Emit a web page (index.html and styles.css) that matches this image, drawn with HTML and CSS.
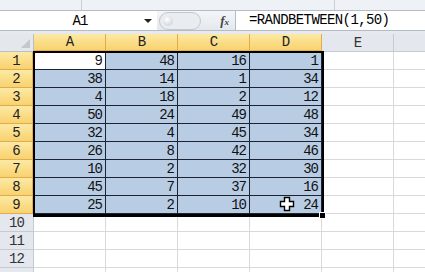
FILE: index.html
```html
<!DOCTYPE html>
<html lang="zh-CN">
<head>
    <meta charset="UTF-8">
    <title>RANDBETWEEN</title>
    <link rel="stylesheet" href="styles.css">
</head>
<body>
    <div class="ribbon">
        <span class="sep sep-1"></span>
        <span class="sep sep-2"></span>
    </div>

    <div class="formula-bar">
        <div class="name-box">
            <span class="cell-ref">A1</span>
            <span class="drop"></span>
        </div>
        <div class="fx-panel">
            <span class="pill"><span class="knob"></span></span>
            <span class="fx">f<sub>x</sub></span>
        </div>
        <div class="formula">=RANDBETWEEN(1,50)</div>
    </div>
    <div class="bar-gap"></div>

    <div class="sheet-wrap">
        <div class="sheet" id="sheet"></div>
        <div class="selection"><span class="handle"></span></div>
        <svg class="cursor" width="16" height="16" viewBox="0 0 16 16">
            <path d="M5.5 1.5h5v4h4v5h-4v4h-5v-4h-4v-5h4z" fill="#fff" stroke="#000" stroke-width="1.4"/>
        </svg>
    </div>

    <script>
        const cols = ["A", "B", "C", "D", "E"];
        const data = [
            [9, 48, 16, 1],
            [38, 14, 1, 34],
            [4, 18, 2, 12],
            [50, 24, 49, 48],
            [32, 4, 45, 34],
            [26, 8, 42, 46],
            [10, 2, 32, 30],
            [45, 7, 37, 16],
            [25, 2, 10, 24]
        ];
        const sheet = document.getElementById("sheet");
        let html = '<div class="corner"><span class="tri"></span></div>';

        cols.forEach((c, i) => {
            html += `<div class="col-head${i < 4 ? " on" : ""}">${c}</div>`;
        });
        html += '<div class="col-head rest"></div>';

        // row 13 only peeks in at the bottom edge, so no label
        for (let r = 1; r <= 13; r++) {
            const row = data[r - 1];
            html += `<div class="row-head${row ? " on" : ""}">${r < 13 ? r : ""}</div>`;
            for (let c = 0; c < 5; c++) {
                if (row && c < 4) {
                    const cls = r === 1 && c === 0 ? "cell in active" : "cell in";
                    html += `<div class="${cls}">${row[c]}</div>`;
                } else {
                    html += '<div class="cell"></div>';
                }
            }
            html += '<div class="cell rest"></div>';
        }
        sheet.innerHTML = html;
    </script>
</body>
</html>
```

FILE: styles.css
```css
body {
    margin: 0;
    width: 425px;
    height: 272px;
    overflow: hidden;
    background: #fff;
    font-family: "Liberation Mono", "DejaVu Sans Mono", monospace;
}
.ribbon {
    position: relative;
    height: 10px;
    background: #eef1f5;
    border-bottom: 1px solid #b4bcc6;
}
.sep {
    position: absolute;
    top: 0;
    width: 1px;
    height: 10px;
    background: #c9cfd7;
}
.sep-1 { left: 81px; }
.sep-2 { left: 334px; }
.formula-bar {
    display: flex;
    height: 19px;
    border-bottom: 1px solid #b4bcc6;
}
.name-box {
    width: 157px;
    display: flex;
    align-items: center;
    background: #fff;
}
.cell-ref {
    flex: 1;
    text-align: center;
    font-size: 14px;
    letter-spacing: -1px;
    padding-left: 16px;
}
.drop {
    width: 0;
    height: 0;
    margin-right: 5px;
    border-left: 4px solid transparent;
    border-right: 4px solid transparent;
    border-top: 4px solid #222;
}
.fx-panel {
    width: 78px;
    display: flex;
    align-items: center;
    justify-content: space-between;
    background: linear-gradient(#f4f6f8, #e4e8ed);
    border-right: 1px solid #b4bcc6;
}
.pill {
    width: 40px;
    height: 16px;
    margin-left: 2px;
    border: 1px solid #c3c8cf;
    border-radius: 9px;
    background: #e9ecf0;
    display: flex;
    align-items: center;
}
.knob {
    width: 10px;
    height: 10px;
    margin-left: 3px;
    border-radius: 50%;
    background: radial-gradient(circle at 40% 35%, #fff, #c4c9d0);
}
.fx {
    margin-right: 6px;
    font: italic bold 13px "Liberation Serif", serif;
    color: #444;
}
.fx sub {
    font-size: 9px;
    vertical-align: 0;
}
.formula {
    flex: 1;
    padding-left: 13px;
    font-size: 14px;
    letter-spacing: -0.6px;
    line-height: 19px;
    background: #fff;
}
.bar-gap {
    height: 3px;
    background: #e6e9ee;
}
.sheet-wrap {
    position: relative;
}
.sheet {
    display: grid;
    grid-template-columns: 34px repeat(5, 72px) 1fr;
    grid-auto-rows: 18px;
    font-size: 14px;
    letter-spacing: -1px;
}
.corner {
    position: relative;
    background: #e4e7ec;
    border-right: 1px solid #b9bfc7;
    border-bottom: 1px solid #b9bfc7;
}
.tri {
    position: absolute;
    right: 3px;
    bottom: 3px;
    border-left: 9px solid transparent;
    border-bottom: 9px solid #c3c8cf;
}
.col-head, .row-head {
    display: flex;
    align-items: center;
    justify-content: center;
    background: #e4e8ee;
    border-right: 1px solid #c6cbd2;
    border-bottom: 1px solid #c6cbd2;
    color: #333;
}
.col-head.on, .row-head.on {
    background: linear-gradient(#fde9a4, #f8d26f);
    border-right-color: #e2ac4a;
    border-bottom-color: #e2ac4a;
    color: #222;
}
.col-head.on {
    border-bottom: 2px solid #e8b04b;
}
.row-head.on {
    border-right: 2px solid #e8b04b;
}
.col-head.rest {
    border-right: none;
}
.cell {
    border-right: 1px solid #d9d9d9;
    border-bottom: 1px solid #d9d9d9;
    text-align: right;
    padding-right: 3px;
    line-height: 18px;
}
.cell.in {
    background: #b8cce4;
    border-right-color: #1c2433;
    border-bottom-color: #1c2433;
    color: #111;
}
.cell.active {
    background: #fff;
}
.cell.rest {
    border-right: none;
}
.selection {
    position: absolute;
    left: 33px;
    top: 17px;
    width: 287px;
    height: 161px;
    border: 2px solid #000;
    border-bottom-width: 3px;
    pointer-events: none;
}
.handle {
    position: absolute;
    right: -4px;
    bottom: -5px;
    width: 5px;
    height: 5px;
    background: #000;
    border: 1px solid #fff;
}
.cursor {
    position: absolute;
    left: 279px;
    top: 162px;
}
```
